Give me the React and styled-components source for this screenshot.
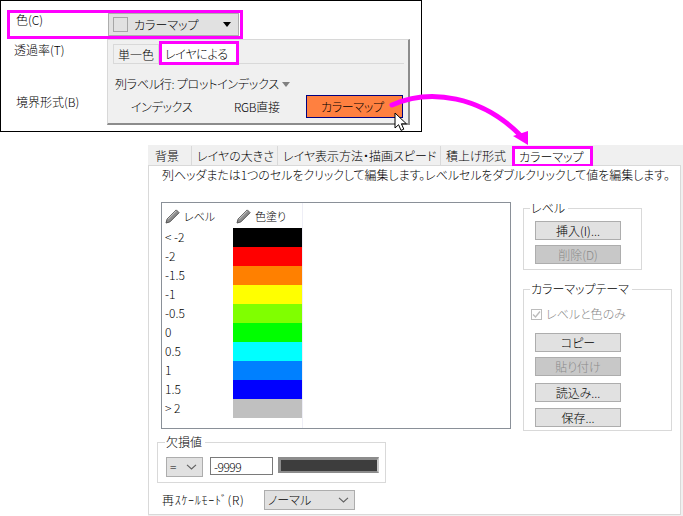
import React from 'react'
import styled, { createGlobalStyle } from 'styled-components'

const PINK = '#ff00ff'
const LEVELS = [
  { label: '< -2', color: '#000000' },
  { label: '-2', color: '#ff0000' },
  { label: '-1.5', color: '#ff8000' },
  { label: '-1', color: '#ffff00' },
  { label: '-0.5', color: '#80ff00' },
  { label: '0', color: '#00ff00' },
  { label: '0.5', color: '#00ffff' },
  { label: '1', color: '#0080ff' },
  { label: '1.5', color: '#0000ff' },
  { label: '> 2', color: '#c0c0c0' },
]

const GlobalStyle = createGlobalStyle`
  html, body {
    margin: 0;
    background: #fff;
  }
  body {
    color: #000;
    font-family: "Noto Sans CJK JP", "Liberation Sans", sans-serif;
    font-size: 12px;
    font-weight: 300;
    line-height: 14px;
    font-feature-settings: "palt";
  }
  * {
    box-sizing: border-box;
  }
`

const Page = styled.div`
  position: relative;
  width: 683px;
  height: 516px;
  overflow: hidden;
`

const FormPanel = styled.section`
  position: relative;
  width: 422px;
  height: 132px;
  padding: 9px 0 0 6px;
  border: 1px solid #000;
`

const ColorRow = styled.div`
  display: flex;
  align-items: flex-start;
  width: 236px;
  height: 29px;
  padding: 0 0 0 6px;
  border: 3px solid ${PINK};
`

const FormLabel = styled.div`
  margin: ${(p) => p.$margin};
`

const ColorLabel = styled(FormLabel)`
  width: 92px;
  margin-top: 0;
`

const ColorCombo = styled.div`
  display: flex;
  align-items: center;
  width: 131px;
  height: 23px;
  padding: 0 7px 0 4px;
  border: 1px solid #adadad;
  background: #e1e1e1;
`

const Swatch = styled.span`
  width: 15px;
  height: 15px;
  margin-right: 6px;
  border: 1px solid #a6a6a6;
`

const ComboText = styled.span`
  flex: 1;
`

const BlackCaret = styled.span`
  width: 0;
  height: 0;
  border-style: solid;
  border-width: 5px 4.5px 0;
  border-color: #000 transparent transparent;
`

const Popup = styled.div`
  position: absolute;
  left: 106px;
  top: 38px;
  width: 303px;
  height: 86px;
  padding: 0 4px 0 5px;
  border: 1px solid #d8d8d8;
  border-width: 1px 2px 2px 1px;
  border-right-color: #8c8c8c;
  border-bottom-color: #8c8c8c;
  background: #f0f0f0;
`

const PopupTabs = styled.div`
  display: flex;
  align-items: flex-end;
  height: 24px;
  border-bottom: 1px solid #d9d9d9;
`

const PopupTab = styled.div`
  width: 46px;
  height: 19px;
  padding: 3px 0 0 4px;
  border: 1px solid #d9d9d9;
  border-bottom: 0;
`

const PopupTabActive = styled.div`
  width: 80px;
  height: 24px;
  margin-bottom: -2px;
  padding: 3px 0 0 3px;
  border: 3px solid ${PINK};
  background: #fff;
  letter-spacing: -0.3px;
`

const RowLabel = styled.div`
  display: flex;
  align-items: center;
  height: 14px;
  margin: 13px 0 0 2px;
  letter-spacing: -0.25px;
`

const GreyCaret = styled.span`
  width: 0;
  height: 0;
  margin-left: 3px;
  border-style: solid;
  border-width: 5px 4px 0;
  border-color: #808080 transparent transparent;
`

const ModeRow = styled.div`
  display: flex;
  align-items: center;
  height: 23px;
  margin-top: 4px;
  padding-left: 18px;
  letter-spacing: -0.3px;
`

const ModeItem = styled.div`
  width: ${(p) => p.$width}px;
`

const ModeButton = styled.div`
  width: 97px;
  height: 23px;
  padding: 4px 0 0 14px;
  border: 1px solid #000080;
  background: #ff8040;
`

const Dialog = styled.section`
  width: 535px;
  height: 371px;
  margin: 13px 0 0 148px;
  background: #f0f0f0;
`

const TabStrip = styled.div`
  display: flex;
  height: 20px;
  padding: 1px 0 0 2px;
`

const DialogTab = styled.div`
  padding: 3px 5px 0;
  border-right: 1px solid ${(p) => (p.$last ? 'transparent' : '#d9d9d9')};
  width: ${(p) => p.$width}px;
  white-space: nowrap;
`

const DialogTabActive = styled.div`
  width: 81px;
  height: 20px;
  padding: 1px 0 0 4px;
  border: 3px solid ${PINK};
  border-bottom-width: 2px;
  background: #fff;
  position: relative;
  z-index: 1;
`

const TabBody = styled.div`
  width: 533px;
  height: 350px;
  padding: 1px 12px 0;
  border: 1px solid #d9d9d9;
  background: #fff;
`

const Hint = styled.p`
  margin: 0 0 19px 1px;
  height: 16px;
  line-height: 16px;
  letter-spacing: -0.06px;
  white-space: nowrap;
`

const MainRow = styled.div`
  display: flex;
  align-items: flex-start;
  gap: 12px;
`

const LevelList = styled.div`
  display: flex;
  flex: none;
  width: 350px;
  height: 227px;
  border: 1px solid #8a9098;
`

const Column = styled.div`
  width: ${(p) => p.$width}px;
  height: 225px;
  border-right: 1px solid ${(p) => (p.$lined ? '#eeeef6' : 'transparent')};
`

const ColumnHead = styled.div`
  display: flex;
  align-items: center;
  gap: 4px;
  height: 25px;
  padding: 1px 0 0 3px;
  font-size: 11px;
`

const LevelCell = styled.div`
  height: 19px;
  padding-left: 3px;
  line-height: 18px;
  white-space: pre;
  font-feature-settings: normal;
`

const ColorCell = styled.div`
  height: 19px;
  background: ${(p) => p.$color};
`

const SideColumn = styled.div`
  display: flex;
  flex-direction: column;
  gap: 12px;
  margin-top: -1px;
`

const Group = styled.fieldset`
  width: ${(p) => p.$width}px;
  height: ${(p) => p.$height}px;
  margin: 0;
  padding: 6px 0 0 11px;
  border: 1px solid #d9d9d9;
`

const Legend = styled.legend`
  margin-left: -5px;
  padding: 0 3px 0 1px;
  line-height: 14px;
`

const ActionButton = styled.button`
  display: block;
  width: 86px;
  height: 19px;
  margin: ${(p) => p.$top || 0}px 0 0;
  padding: 0;
  border: 1px solid #adadad;
  background: #e1e1e1;
  color: #000;
  font: inherit;
  font-feature-settings: inherit;
  line-height: 16px;

  &:disabled {
    background: #c8c8c8;
    color: #8a8a8a;
  }
`

const CheckRow = styled.div`
  display: flex;
  align-items: center;
  gap: 4px;
  margin: 5px 0 12px -4px;
  color: #8a8a8a;
`

const CheckBox = styled.span`
  display: flex;
  width: 11px;
  height: 11px;
  border: 1px solid #bcbcbc;
`

const MissingGroup = styled(Group)`
  margin: 4px 0 0 -4px;
  padding: 8px 0 0 8px;
`

const MissingLegend = styled(Legend)`
  margin-left: -1px;
`

const MissingRow = styled.div`
  display: flex;
  align-items: flex-start;
`

const SmallSelect = styled.div`
  display: flex;
  align-items: center;
  justify-content: space-between;
  width: ${(p) => p.$width}px;
  height: ${(p) => p.$height}px;
  padding: 0 5px 0 3px;
  border: 1px solid #adadad;
  background: #e1e1e1;
`

const ValueInput = styled.input`
  width: 63px;
  height: 18px;
  margin: 0 5px 0 7px;
  padding: 0 3px;
  border: 1px solid #7a7a7a;
  background: #fff;
  color: #000;
  font: inherit;
  letter-spacing: -0.5px;
  font-feature-settings: normal;
  outline: none;
`

const MissingColor = styled.div`
  width: 101px;
  height: 16px;
  border: 2px solid #8c8c8c;
  border-left-width: 3px;
  border-top-width: 3px;
  border-right-color: #c8c8c8;
  background: #3d3d3d;
`

const RescaleRow = styled.div`
  display: flex;
  align-items: center;
  height: 20px;
  margin: 7px 0 0 1px;
`

const RescaleLabel = styled.div`
  width: 102px;
  letter-spacing: 0.7px;
  font-feature-settings: normal;
`

const PencilIcon = () => (
  <svg width="15" height="15" viewBox="0 0 15 15">
    <path d="M11.3 .9 14.1 3.7 4.9 12.9 1 14 2.1 10.1Z" fill="#8c8c8c" stroke="#555" strokeWidth="1" />
    <path d="M2.9 10.3 11.4 1.8" stroke="#d0d0d0" strokeWidth="1" />
  </svg>
)

const Chevron = () => (
  <svg width="11" height="6" viewBox="0 0 11 6">
    <path d="M1 .8 5.5 5 10 .8" fill="none" stroke="#606060" strokeWidth="1.1" />
  </svg>
)

const CheckMark = () => (
  <svg width="9" height="9" viewBox="0 0 9 9">
    <path d="M1 4.5 3.5 7 8 1.5" fill="none" stroke="#bcbcbc" strokeWidth="1.4" />
  </svg>
)

const CursorSvg = styled.svg`
  position: absolute;
  left: 393px;
  top: 111px;
`

const ArrowSvg = styled.svg`
  position: absolute;
  left: 0;
  top: 0;
  pointer-events: none;
`

const Cursor = () => (
  <CursorSvg width="15" height="20" viewBox="0 0 15 20">
    <path d="M1 1V16L4.6 12.7 7 18.4 9.8 17.2 7.4 11.8H12.4Z" fill="#fff" stroke="#000" strokeWidth="1" />
  </CursorSvg>
)

const ArrowOverlay = () => (
  <ArrowSvg width="683" height="516">
    <path d="M392 105C430 88 482 96 521 136" fill="none" stroke={PINK} strokeWidth="5" strokeLinecap="round" />
    <path d="M528 131 513 136 528 145Z" fill={PINK} />
  </ArrowSvg>
)

const App = () => (
  <Page>
    <GlobalStyle />
    <FormPanel>
      <ColorRow>
        <ColorLabel>色(C)</ColorLabel>
        <ColorCombo>
          <Swatch />
          <ComboText>カラーマップ</ComboText>
          <BlackCaret />
        </ColorCombo>
      </ColorRow>
      <FormLabel $margin="4px 0 0 7px">透過率(T)</FormLabel>
      <FormLabel $margin="38px 0 0 9px">境界形式(B)</FormLabel>
      <Popup>
        <PopupTabs>
          <PopupTab>単一色</PopupTab>
          <PopupTabActive>レイヤによる</PopupTabActive>
        </PopupTabs>
        <RowLabel>
          列ラベル行: プロットインデックス
          <GreyCaret />
        </RowLabel>
        <ModeRow>
          <ModeItem $width={103}>インデックス</ModeItem>
          <ModeItem $width={72}>RGB直接</ModeItem>
          <ModeButton>カラーマップ</ModeButton>
        </ModeRow>
      </Popup>
      <Cursor />
    </FormPanel>

    <Dialog>
      <TabStrip>
        <DialogTab $width={42}>背景</DialogTab>
        <DialogTab $width={86}>レイヤの大きさ</DialogTab>
        <DialogTab $width={163}>レイヤ表示方法・描画スピード</DialogTab>
        <DialogTab $width={71} $last>積上げ形式</DialogTab>
        <DialogTabActive>カラーマップ</DialogTabActive>
      </TabStrip>
      <TabBody>
        <Hint>列ヘッダまたは1つのセルをクリックして編集します。レベルセルをダブルクリックして値を編集します。</Hint>
        <MainRow>
          <LevelList>
            <Column $width={71}>
              <ColumnHead>
                <PencilIcon />
                レベル
              </ColumnHead>
              {LEVELS.map((level) => (
                <LevelCell key={level.label}>{level.label}</LevelCell>
              ))}
            </Column>
            <Column $width={70} $lined>
              <ColumnHead>
                <PencilIcon />
                色塗り
              </ColumnHead>
              {LEVELS.map((level) => (
                <ColorCell key={level.label} $color={level.color} />
              ))}
            </Column>
          </LevelList>
          <SideColumn>
            <Group $width={119} $height={69}>
              <Legend>レベル</Legend>
              <ActionButton>挿入(I)...</ActionButton>
              <ActionButton $top={5} disabled>削除(D)</ActionButton>
            </Group>
            <Group $width={149} $height={149}>
              <Legend>カラーマップテーマ</Legend>
              <CheckRow>
                <CheckBox>
                  <CheckMark />
                </CheckBox>
                レベルと色のみ
              </CheckRow>
              <ActionButton>コピー</ActionButton>
              <ActionButton $top={5} disabled>貼り付け</ActionButton>
              <ActionButton $top={7}>読込み...</ActionButton>
              <ActionButton $top={6}>保存...</ActionButton>
            </Group>
          </SideColumn>
        </MainRow>
        <MissingGroup $width={229} $height={48}>
          <MissingLegend>欠損値</MissingLegend>
          <MissingRow>
            <SmallSelect $width={37} $height={20}>
              =
              <Chevron />
            </SmallSelect>
            <ValueInput readOnly value="-9999" />
            <MissingColor />
          </MissingRow>
        </MissingGroup>
        <RescaleRow>
          <RescaleLabel>再ｽｹｰﾙﾓｰﾄﾞ(R)</RescaleLabel>
          <SmallSelect $width={91} $height={20}>
            ノーマル
            <Chevron />
          </SmallSelect>
        </RescaleRow>
      </TabBody>
    </Dialog>
    <ArrowOverlay />
  </Page>
)

export default App
